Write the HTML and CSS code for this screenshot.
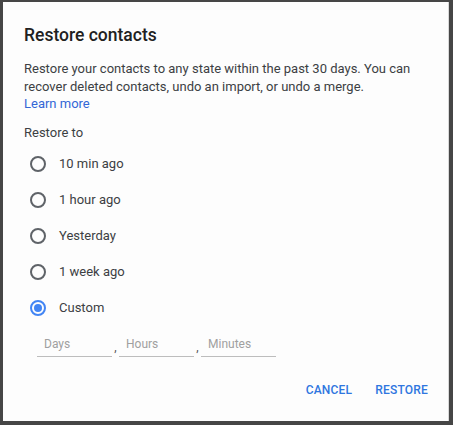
FILE: index.html
```html
<!DOCTYPE html>
<html>
<head>
<meta charset="utf-8">
<link rel="stylesheet" href="styles.css">
</head>
<body>
<div class="dialog">
  <h1 class="title">Restore contacts</h1>
  <p class="desc">Restore your contacts to any state within the past 30 days. You can recover deleted contacts, undo an import, or undo a merge.<br><a class="link" href="#">Learn more</a></p>
  <div class="label">Restore to</div>
  <div class="options">
    <div class="option"><span class="radio"></span><span class="opt-text">10 min ago</span></div>
    <div class="option"><span class="radio"></span><span class="opt-text">1 hour ago</span></div>
    <div class="option"><span class="radio"></span><span class="opt-text">Yesterday</span></div>
    <div class="option"><span class="radio"></span><span class="opt-text">1 week ago</span></div>
    <div class="option"><span class="radio checked"></span><span class="opt-text">Custom</span></div>
  </div>
  <div class="fields">
    <div class="field">Days</div><span class="comma">,</span>
    <div class="field">Hours</div><span class="comma">,</span>
    <div class="field">Minutes</div>
  </div>
  <div class="actions">
    <button class="btn">CANCEL</button>
    <button class="btn">RESTORE</button>
  </div>
</div>
</body>
</html>
```
FILE: styles.css
```css
html, body {
  margin: 0;
  height: 425px;
  overflow: hidden;
}
body {
  background: #464646;
  padding: 2px 4px 4px 3px;
  box-sizing: border-box;
  font-family: Roboto, "Liberation Sans", sans-serif;
}
.dialog {
  background: #fdfdfd;
  height: 419px;
  box-sizing: border-box;
  padding: 0 12px 0 21px;
  display: flex;
  flex-direction: column;
  border-right: 1px solid #d8d8d8;
}
.title {
  margin: 22px 0 0 0;
  font-size: 17.5px;
  line-height: 22px;
  font-weight: 500;
  color: #212121;
}
.desc {
  margin: 14px 0 0 0;
  font-size: 13px;
  line-height: 17.5px;
  color: #3c4043;
}
.link {
  color: #3367d6;
  text-decoration: none;
}
.label {
  margin-top: 11px;
  font-size: 13px;
  line-height: 18px;
  color: #3c4043;
}
.options {
  display: flex;
  flex-direction: column;
  margin-top: 4px;
}
.option {
  display: flex;
  align-items: center;
  height: 36px;
  padding-left: 6px;
}
.radio {
  width: 16px;
  height: 16px;
  border: 2px solid #5f6368;
  border-radius: 50%;
  box-sizing: border-box;
  position: relative;
}
.radio.checked {
  border-color: #4285f4;
}
.radio.checked::after {
  content: "";
  position: absolute;
  left: 2px;
  top: 2px;
  width: 8px;
  height: 8px;
  border-radius: 50%;
  background: #4285f4;
}
.opt-text {
  margin-left: 13px;
  font-size: 13px;
  color: #3c4043;
}
.fields {
  display: flex;
  align-items: flex-end;
  margin-top: 10px;
  padding-left: 13px;
}
.field {
  width: 75px;
  box-sizing: border-box;
  padding: 0 0 4px 7px;
  font-size: 12px;
  line-height: 16px;
  color: #a0a0a0;
  border-bottom: 1px solid #bdbdbd;
}
.comma {
  width: 7px;
  font-size: 12px;
  line-height: 16px;
  color: #555;
  text-align: center;
  padding-bottom: 2px;
}
.actions {
  display: flex;
  justify-content: flex-end;
  gap: 7px;
  margin-top: 18px;
}
.btn {
  background: none;
  border: 0;
  padding: 8px;
  font-family: Roboto, "Liberation Sans", sans-serif;
  font-size: 12px;
  font-weight: 500;
  color: #2f76e0;
  letter-spacing: 0.2px;
}
```
